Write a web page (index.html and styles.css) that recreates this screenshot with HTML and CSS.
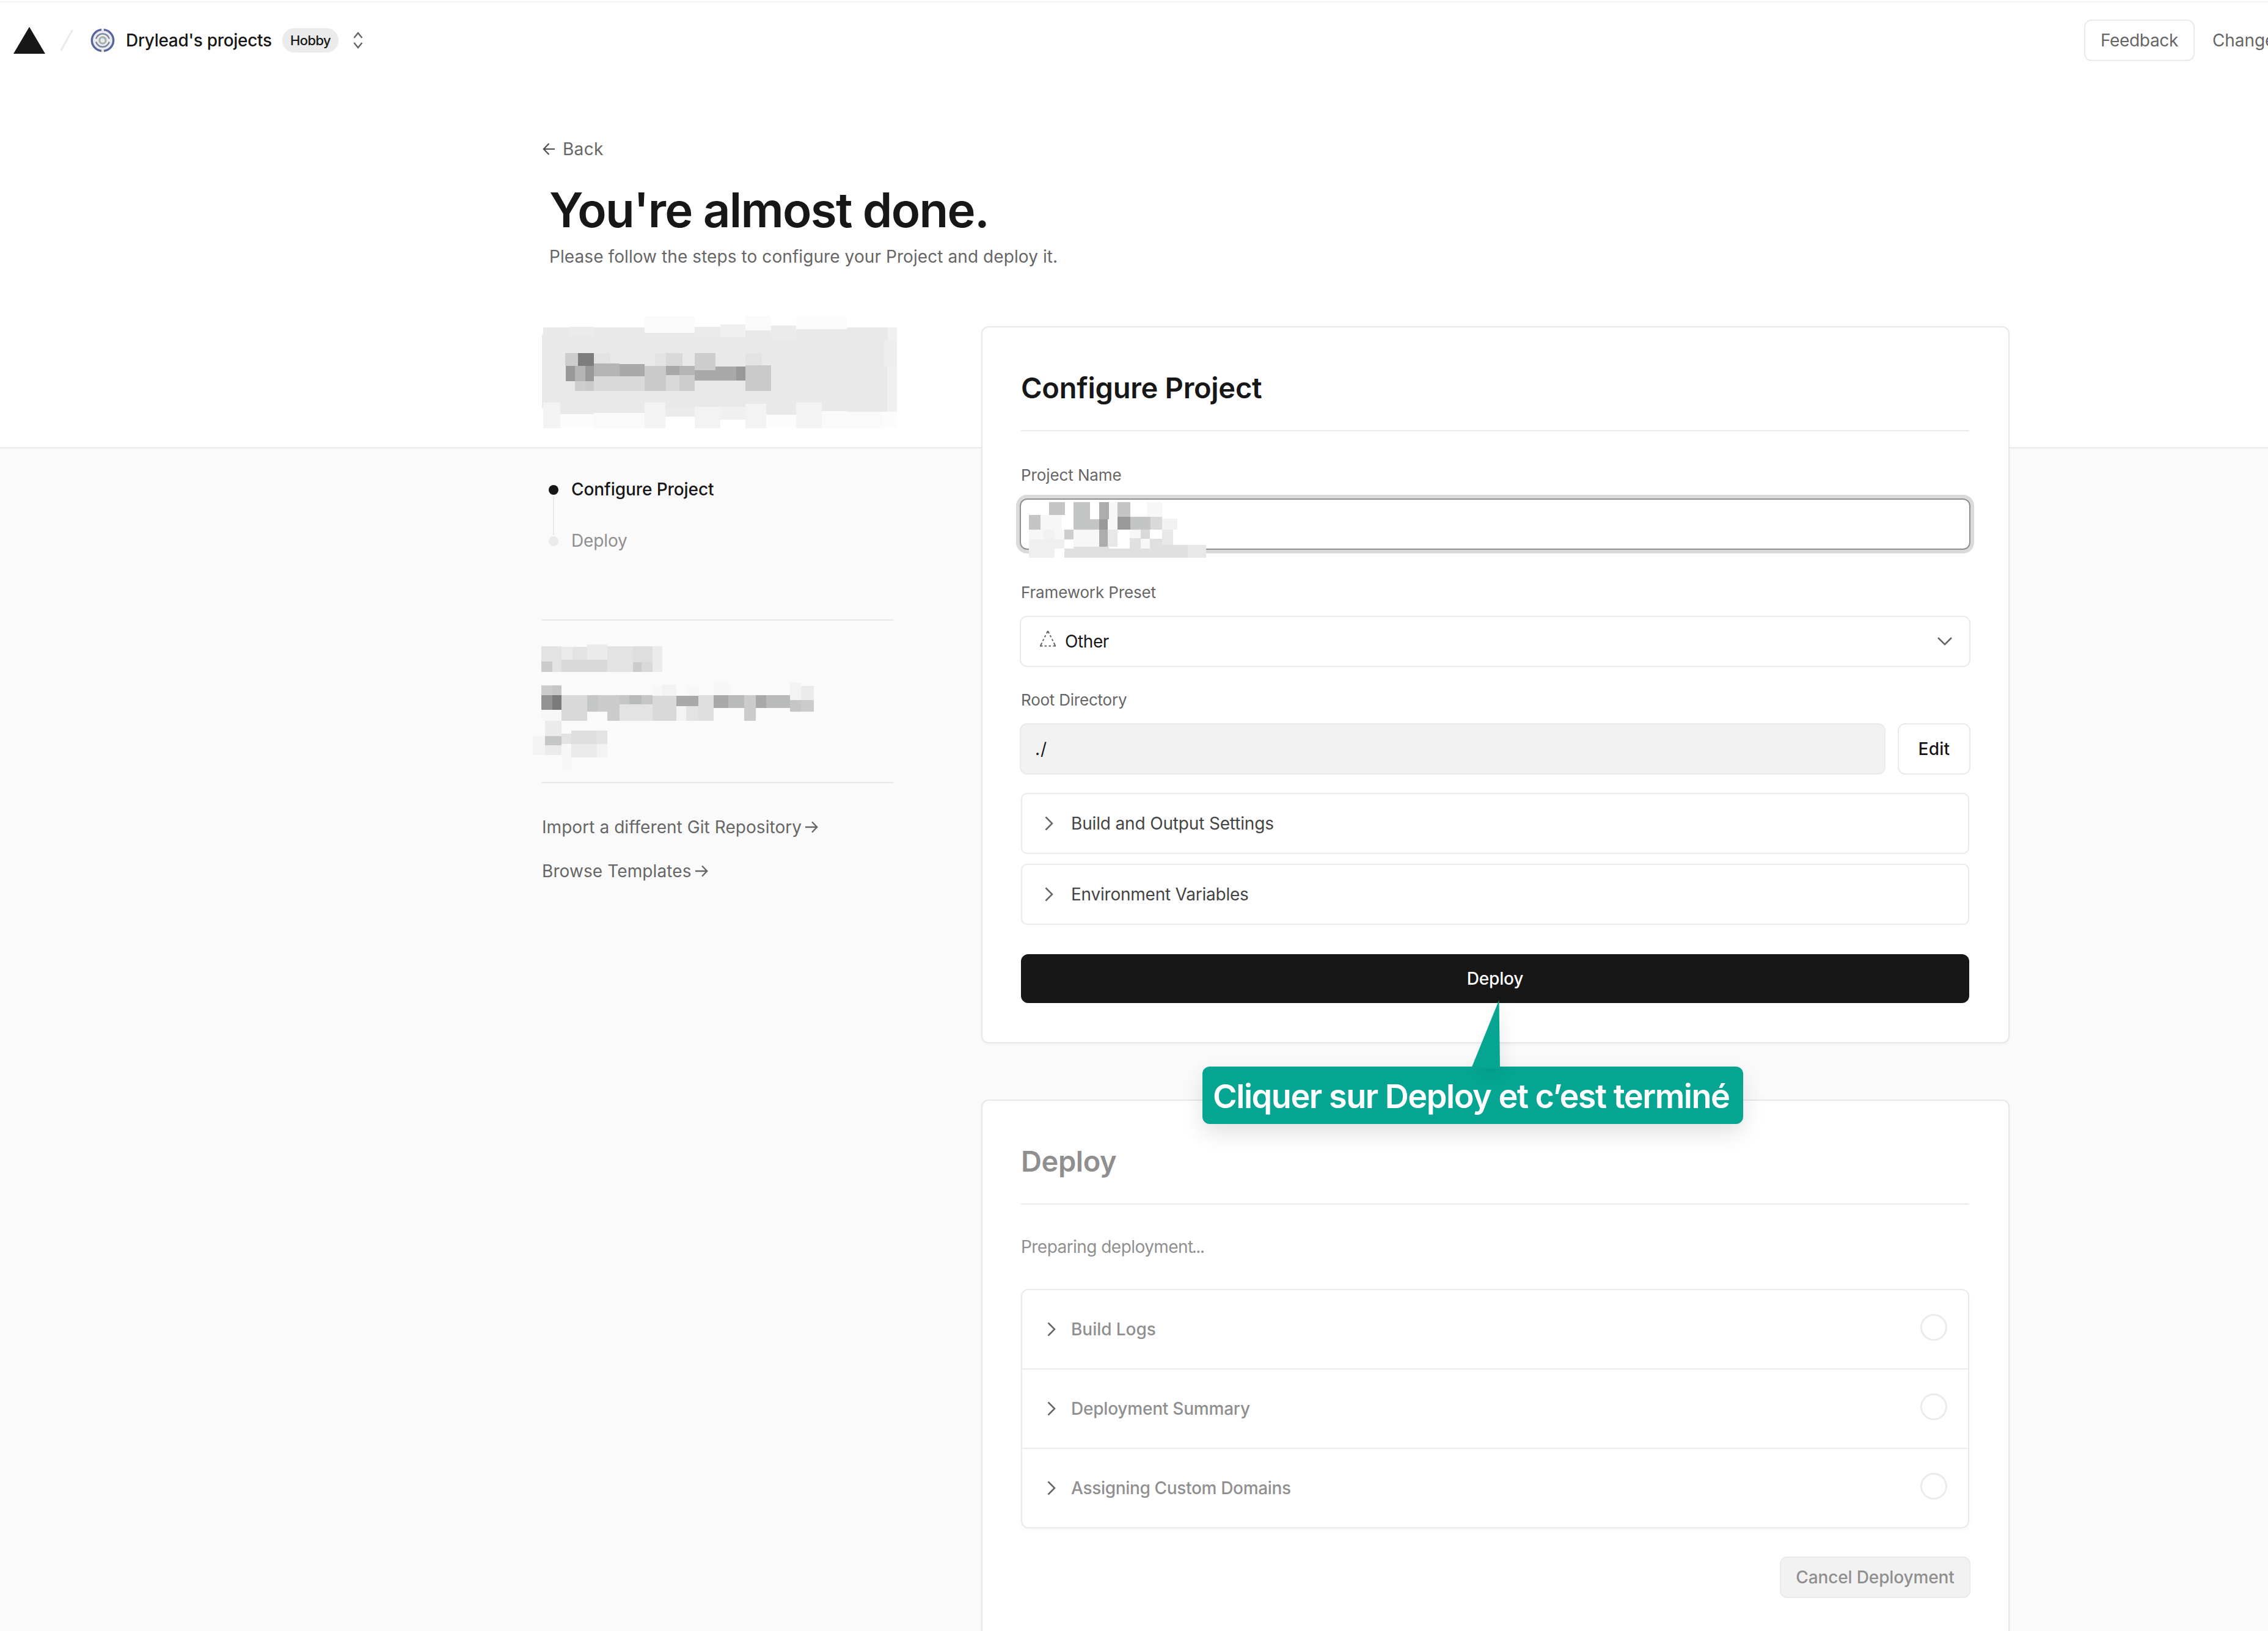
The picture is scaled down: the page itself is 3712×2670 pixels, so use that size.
FILE: index.html
```
<!DOCTYPE html>
<html lang="en">
<head>
<meta charset="utf-8">
<title>Configure Project</title>
<link rel="stylesheet" href="styles.css">
</head>
<body>
<div class="page">
  <header class="topbar">
    <svg class="logo" width="52" height="44" viewBox="0 0 52 44"><path d="M26 0 52 44H0z" fill="#171717"/></svg>
    <svg class="slash" width="24" height="38" viewBox="0 0 24 38"><path d="M21 3 3 35" stroke="#eaeaea" stroke-width="3" stroke-linecap="round"/></svg>
    <svg class="avatar" width="40" height="40" viewBox="0 0 40 40" fill="none">
      <circle cx="20" cy="20" r="19.5" fill="#ebebeb"/>
      <path d="M22 2.600A17.500 17.500 0 0 1 22 37.400M18 37.400A17.500 17.500 0 0 1 18 2.600" stroke="#56659c" stroke-width="3.400"/>
      <path d="M9.200 17.500A11.200 11.200 0 0 1 30.800 17.500M30.800 22.500A11.200 11.200 0 0 1 9.200 22.500" stroke="#7c87a6" stroke-width="2.600"/>
      <circle cx="20" cy="20" r="5.200" stroke="#a9adab" stroke-width="3"/>
      <path d="M17.500 16.200a5 5 0 0 1 6.500 6" stroke="#9cc4bd" stroke-width="1.500"/>
    </svg>
    <span class="team">Drylead's projects</span>
    <span class="plan">Hobby</span>
    <svg class="updown" width="16" height="28" viewBox="0 0 16 28" fill="none" stroke="#666" stroke-width="2.500"><path d="M1.500 10 8 2l6.500 8M1.500 18 8 26l6.500-8"/></svg>
    <nav class="topnav">
      <a class="feedback">Feedback</a>
      <a class="changelog">Changelog</a>
    </nav>
  </header>

  <section class="intro">
    <a class="back"><svg width="20" height="20" viewBox="0 0 20 20" fill="none" stroke="#4d4d4d" stroke-width="2.200"><path d="M10.500 1 1.800 10l8.700 9M2 10h18"/></svg><span>Back</span></a>
    <h1>You're almost done.</h1>
    <p>Please follow the steps to configure your Project and deploy it.</p>
  </section>

  <div class="columns">
    <aside class="sidebar">
      <svg class="mosaic" width="640" height="220" viewBox="0 0 1568 660" preserveAspectRatio="none" shape-rendering="crispEdges">
        <path fill="#e9e9e9" d="M71 108h1382v414H1289V545H71V505h-5V140h5z"/>
        <path fill="#ebebeb" d="M174 105h100v45H174zM679 105h103v50H679zM985 99h100v73H985zM561 500h118v46H561z"/>
        <path fill="#fafafa" d="M478 51h201v84H478zM882 51h103v72H882zM274 528h204v75H274zM1188 519h101v84h-101zM1289 522h145v81h-145z"/>
        <path fill="#fcfcfc" d="M1085 51h204v66h-204zM140 534h134v69H140zM965 537h120v66H965zM1434 522h56v81h-56z"/>
        <path fill="#fff" d="M561 546h118v57H561zM782 561h100v42H782z"/>
        <path fill="#f0f0f0" d="M782 93h100v64H782zM1453 108h37v64h-37zM1450 297h40v225h-40zM782 498h100v63H782z"/>
        <path fill="#eeeeee" d="M1437 172h53v125h-53z"/>
        <path fill="#f3f3f3" d="M71 477h69v126H71zM478 477h83v126h-83zM882 484h83v119h-83zM1085 477h103v126h-103zM679 498h103v105H679z"/>
        <path fill="#e3e3e3" d="M274 234h67v52h-67zM520 234h43v63h-43zM882 234h65v60h-65z"/>
        <path fill="#d9d9d9" d="M563 234h67v63h-67zM274 348h204v72H274zM563 342h54v78h-54z"/>
        <path fill="#cdcdcd" d="M159 234h52v63h-52zM679 234h83v84h-83zM198 372h42v48h-42zM617 342h62v78h-62z"/>
        <path fill="#c9cac9" d="M478 297h85v123h-85zM882 294h103v126H882zM240 372h34v48h-34z"/>
        <path fill="#b5b5b5" d="M198 297h42v75h-42zM274 285h103v63H274zM617 297h62v45h-62z"/>
        <path fill="#a9a9a9" d="M377 288h101v60H377zM563 297h54v45h-54zM679 318h83v51h-83zM762 300h83v69h-83z"/>
        <path fill="#999" d="M162 297h36v75h-36zM240 297h34v75h-34zM845 300h37v69h-37z"/>
        <path fill="#7d7d7d" d="M211 234h63v63h-63z"/>
      </svg>
      <div class="step step-active"><i></i><span>Configure Project</span></div>
      <div class="step-line"></div>
      <div class="step"><i></i><span>Deploy</span></div>
      <hr class="rule rule-first">
      <svg class="mosaic mosaic-repo" width="640" height="250" viewBox="0 0 1568 750" preserveAspectRatio="none" shape-rendering="crispEdges">
        <path fill="#e3e3e3" d="M64 84h81v126H64zM328 84h221v126H328zM189 87h58v63h-58zM377 369h133v81H377zM645 378h48v72h-48zM145 513h39v51h-39zM283 498h45v66h-45z"/>
        <path fill="#ebebeb" d="M145 87h44v63h-44zM247 75h81v75h-81zM510 84h39v126h-39zM78 450h67v75H78zM78 570h67v48H78zM184 564h103v66H184zM1105 279h51v69h-51z"/>
        <path fill="#dedede" d="M431 84h79v78h-79zM184 498h99v66h-99zM693 324h62v126h-62z"/>
        <path fill="#d9d9d9" d="M145 150h183v60H145zM466 162h44v48h-44zM145 324h102v126H145zM510 327h95v123h-95z"/>
        <path fill="#cccccc" d="M64 159h43v51H64zM431 162h35v48h-35zM328 324h49v126h-49zM292 324h36v81h-36zM877 324h47v126h-47zM1105 348h51v57h-51zM64 276h43v48H64z"/>
        <path fill="#c5c7c6" d="M107 276h38v48h-38zM247 324h45v81h-45zM377 324h39v45h-39zM465 324h45v45h-45zM1061 348h44v57h-44zM78 525h67v45H78z"/>
        <path fill="#b9bbba" d="M416 324h49v45h-49zM965 324h96v63h-96zM813 324h64v63h-64z"/>
        <path fill="#a9a9a9" d="M605 327h88v51h-88zM755 324h58v63h-58zM924 324h41v63h-41z"/>
        <path fill="#939393" d="M64 324h43v72H64z"/>
        <path fill="#7b7b7b" d="M107 324h38v72h-38z"/>
        <path fill="#f3f3f3" d="M549 273h56v54h-56zM1061 261h44v87h-44zM605 378h40v72h-40zM29 525h49v93H29zM287 564h41v66h-41z"/>
        <path fill="#f7f7f7" d="M510 276h39v51h-39zM649 276h44v51h-44zM64 396h81v54H64zM145 567h39v123h-39zM755 264h70v60h-70z"/>
      </svg>
      <hr class="rule">
      <a class="side-link side-link-first"><span>Import a different Git Repository</span><svg width="21" height="20" viewBox="0 0 21 20" fill="none" stroke="#666" stroke-width="2.400"><path d="M0 10h18.500M11 1.500 19.200 10 11 18.500"/></svg></a>
      <a class="side-link"><span class="browse">Browse Templates</span><svg width="21" height="20" viewBox="0 0 21 20" fill="none" stroke="#666" stroke-width="2.400"><path d="M0 10h18.500M11 1.500 19.200 10 11 18.500"/></svg></a>
    </aside>

    <main class="cards">
      <section class="card">
        <h2>Configure Project</h2>
        <label class="label label-first">Project Name</label>
        <div class="field field-focus">
          <svg class="field-mosaic" width="290" height="91" viewBox="230 906 711 274" preserveAspectRatio="none" shape-rendering="crispEdges">
            <path fill="#fff" d="M230 1090h711v90H230z"/>
            <path fill="#c4c6c5" d="M311 906h64v63h-64zM230 969h47v72h-47zM409 906h66v84h37v51H409zM586 906h51v72h-51zM637 978h81v63h-81z"/>
            <path fill="#acaeae" d="M512 906h39v84h-39zM512 1041h34v84h-34z"/>
            <path fill="#9a9a9a" d="M512 990h34v51h-34zM586 978h51v63h-51z"/>
            <path fill="#cdcdcd" d="M372 1041h37v48h-37z"/>
            <path fill="#d9d9d9" d="M718 978h46v63h-46zM679 1041h36v45h-36z"/>
            <path fill="#f7f7f7" d="M277 969h86v72h-86zM230 1041h142v48H230zM409 1041h103v84H409zM703 906h61v72h-61zM551 906h35v84h-35zM546 990h40v51h-40zM635 1041h44v42h-44zM679 1086h36v48h-36z"/>
            <path fill="#f2f2f2" d="M764 987h62v54h-62zM287 1041h46v48h-46z"/>
            <path fill="#efefef" d="M230 1089h142v45h-39v46H230z"/>
            <path fill="#e8e8e8" d="M546 1041h40v84h-40zM764 1041h44v75h-44zM867 1116h74v64h-74z"/>
            <path fill="#e0e0e0" d="M372 1134h37v46h-37zM409 1125h141v55H409zM550 1134h85v-51h44v51h36v-48h49v30h103v64H550z"/>
          </svg>
        </div>
        <label class="label label-framework">Framework Preset</label>
        <div class="field select">
          <svg class="other-icon" width="28" height="27" viewBox="0 0 28 27" fill="none" stroke="#666" stroke-width="2"><path d="M14 1 11.900 5M16.100 5 14 1M10.300 8 8.800 11M17.700 8 19.200 11M7.300 14.200 5.700 17.200M20.800 14.200 22.300 17.200M4.300 20.200 2 25M23.800 20.200 26 25M1 25.500h4.500M8.500 25.500h3.500M15.500 25.500h3.500M22.500 25.500h4.500"/></svg>
          <span class="other">Other</span>
          <svg class="select-chevron" width="24" height="14" viewBox="0 0 24 14" fill="none" stroke="#666" stroke-width="2.600"><path d="M1 1 12 12 23 1"/></svg>
        </div>
        <label class="label label-root">Root Directory</label>
        <div class="root-row">
          <div class="field root-dir">./</div>
          <button class="edit">Edit</button>
        </div>
        <div class="disclosure disclosure-build"><svg class="chevron" width="14" height="24" viewBox="0 0 14 24" fill="none" stroke="#666" stroke-width="2.600"><path d="M1.500 1.500 12 12 1.500 22.500"/></svg><span>Build and Output Settings</span></div>
        <div class="disclosure disclosure-env"><svg class="chevron" width="14" height="24" viewBox="0 0 14 24" fill="none" stroke="#666" stroke-width="2.600"><path d="M1.500 1.500 12 12 1.500 22.500"/></svg><span>Environment Variables</span></div>
        <button class="deploy">Deploy</button>
      </section>

      <section class="card card-pending">
        <h2>Deploy</h2>
        <p class="status">Preparing deployment<span class="dots">...</span></p>
        <div class="stages">
          <div class="stage"><svg class="chevron" width="14" height="24" viewBox="0 0 14 24" fill="none" stroke="#666" stroke-width="2.600"><path d="M1.500 1.500 12 12 1.500 22.500"/></svg><span>Build Logs</span><i class="ring"></i></div>
          <div class="stage"><svg class="chevron" width="14" height="24" viewBox="0 0 14 24" fill="none" stroke="#666" stroke-width="2.600"><path d="M1.500 1.500 12 12 1.500 22.500"/></svg><span class="summary">Deployment Summary</span><i class="ring"></i></div>
          <div class="stage"><svg class="chevron" width="14" height="24" viewBox="0 0 14 24" fill="none" stroke="#666" stroke-width="2.600"><path d="M1.500 1.500 12 12 1.500 22.500"/></svg><span class="domains">Assigning Custom Domains</span><i class="ring"></i></div>
        </div>
        <button class="cancel">Cancel Deployment</button>
      </section>
    </main>
  </div>

  <div class="callout">
    <svg class="callout-tip" width="48" height="112" viewBox="0 0 48 112"><path d="M45.500 0 47 112H0z" fill="#05a591"/></svg>
    <span>Cliquer sur Deploy et c’est terminé</span>
  </div>
</div>
</body>
</html>
```

FILE: styles.css
```
* { box-sizing: border-box; }

body {
  margin: 0;
  background: #fff;
  color: #171717;
  font: 400 28px/40px Inter, "Liberation Sans", sans-serif;
}

svg { display: block; flex: none; }
h1, h2, p { margin: 0; }
span { white-space: nowrap; }
button { font: inherit; margin: 0; padding: 0; display: block; }

.page {
  position: relative;
  width: 3712px;
  height: 2670px;
  overflow: hidden;
  padding-top: 2px;
  background: linear-gradient(#fff 732px, #eaeaea 732px, #eaeaea 734px, #fafafa 734px);
}

/* Top bar */
.topbar {
  display: flex;
  align-items: center;
  height: 126px;
  padding-left: 22px;
  border-top: 2px solid #f2f2f2;
}
.slash { margin-left: 23px; }
.avatar { margin-left: 27px; }
.team { flex: none; width: 237px; margin-left: 18px; font-weight: 500; letter-spacing: -0.32px; }
.plan {
  flex: none;
  width: 92px;
  height: 40px;
  margin-left: 19px;
  border-radius: 20px;
  background: #ebebeb;
  font-size: 22px;
  font-weight: 500;
  letter-spacing: -0.6px;
  text-align: center;
}
.updown { margin-left: 24px; }
.topnav { display: flex; align-items: center; gap: 29px; width: 301px; margin-left: auto; color: #666; }
.feedback {
  flex: none;
  width: 181px;
  height: 68px;
  border: 2px solid #eaeaea;
  border-radius: 12px;
  line-height: 64px;
  text-align: center;
  letter-spacing: -0.34px;
}
.changelog { letter-spacing: -0.1px; }

/* Intro */
.intro { padding: 96px 0 0 888px; }
.back { display: flex; align-items: center; gap: 13px; height: 40px; color: #666; letter-spacing: 0.3px; }
.intro h1 { margin: 40px 0 0 11px; font-size: 78px; font-weight: 600; line-height: 80px; letter-spacing: -1.7px; }
.intro p { margin: 16px 0 0 11px; color: #666; letter-spacing: 0.08px; }

/* Sidebar */
.columns { display: flex; gap: 106px; padding: 60px 0 0 860px; }
.sidebar { width: 640px; }
.step { display: flex; align-items: center; gap: 21px; height: 40px; padding-left: 38px; color: #8f8f8f; letter-spacing: -0.14px; }
.step i { width: 16px; height: 16px; margin-top: 2px; border-radius: 50%; background: #eaeaea; }
.step-active { margin-top: 61px; color: #171717; font-weight: 500; letter-spacing: -0.08px; }
.step-active i { background: #171717; }
.step-line { width: 2px; height: 64px; margin: -9px 0 -11px 45px; background: #eaeaea; }
.rule { width: 576px; height: 2px; margin: 0 0 0 27px; border: 0; background: #e8e8e8; }
.rule-first { margin-top: 109px; }
.mosaic-repo { margin-top: 14px; }
.side-link { display: flex; align-items: center; gap: 6px; height: 40px; margin-top: 32px; padding-left: 27px; color: #666; letter-spacing: 0.06px; }
.side-link-first { margin-top: 52px; }
.browse { letter-spacing: 0.1px; }

/* Cards */
.cards { display: flex; flex-direction: column; gap: 92px; width: 1683px; padding-top: 34px; }
.card {
  padding: 71px 64px 64px 63px;
  border: 2px solid #e8e8e8;
  border-radius: 12px;
  background: #fff;
  box-shadow: 0 2px 4px rgba(0, 0, 0, 0.04);
}
.card h2 {
  height: 99px;
  border-bottom: 2px solid #eaeaea;
  font-size: 47px;
  font-weight: 600;
  line-height: 56px;
  letter-spacing: -0.27px;
}
.label { display: block; margin: 0 0 22px; color: #666; font-size: 26px; line-height: 33px; letter-spacing: -0.1px; }
.label-first { margin-top: 55px; }
.label-framework { margin-top: 53px; letter-spacing: -0.14px; }
.label-root { margin-top: 37px; letter-spacing: -0.22px; }
.field { position: relative; height: 84px; margin: 0 -2px; border: 2px solid #eaeaea; border-radius: 12px; line-height: 80px; }
.field-focus { border-color: #8f8f8f; box-shadow: 0 0 0 6px #dadada; }
.field-mosaic { position: absolute; left: 13px; top: 4px; }
.select { display: flex; align-items: center; padding: 0 28px 0 30px; }
.other-icon { margin-top: -9px; }
.other { margin-left: 14px; letter-spacing: -0.4px; }
.select-chevron { margin-left: auto; }
.root-row { display: flex; gap: 20px; margin: 0 -2px; }
.root-dir { flex: 1; margin: 0; padding-left: 23px; background: #f2f2f2; letter-spacing: 0.9px; }
.edit { width: 119px; height: 84px; border: 2px solid #eaeaea; border-radius: 12px; background: #fff; color: #171717; font-weight: 500; letter-spacing: 0.25px; }
.disclosure { display: flex; align-items: center; gap: 29px; height: 100px; padding-left: 37px; border: 2px solid #eaeaea; border-radius: 10px; color: #444; letter-spacing: -0.16px; }
.disclosure-build { margin-top: 30px; }
.disclosure-env { margin-top: 16px; letter-spacing: -0.23px; }
.deploy { width: 100%; height: 80px; margin-top: 48px; border: 0; border-radius: 12px; background: #171717; color: #fff; font-weight: 500; letter-spacing: -0.18px; }

/* Pending deployment */
.card-pending h2 { color: #8f8f8f; letter-spacing: -0.42px; }
.status { margin: 49px 0; color: #8f8f8f; letter-spacing: -0.55px; }
.dots { margin-left: -2px; letter-spacing: -1.4px; }
.stages { border: 2px solid #eaeaea; border-radius: 12px; box-shadow: 0 4px 6px rgba(0, 0, 0, 0.03); }
.stage { display: flex; align-items: center; height: 128px; padding: 0 34px 0 41px; color: #8f8f8f; font-weight: 500; }
.stage + .stage { height: 130px; border-top: 2px solid #eaeaea; }
.stage span { margin-left: 25px; letter-spacing: -0.05px; }
.stage .summary { letter-spacing: -0.21px; }
.stage .domains { letter-spacing: -0.33px; }
.ring { width: 44px; height: 44px; margin: -6px 0 0 auto; border: 3px solid #ebebeb; border-radius: 50%; }
.cancel { width: 312px; height: 68px; margin: 46px -2px 0 auto; border: 2px solid #eaeaea; border-radius: 12px; background: #f2f2f2; color: #8f8f8f; font-weight: 500; letter-spacing: -0.13px; }

/* Annotation over the cards */
.callout {
  position: absolute;
  left: 1968px;
  top: 1746px;
  width: 885px;
  height: 94px;
  padding-left: 17px;
  border-radius: 12px;
  background: #05a591;
  color: #fff;
  font-size: 54px;
  font-weight: 600;
  line-height: 97px;
  letter-spacing: -1.48px;
  box-shadow: 0 14px 36px rgba(0, 0, 0, 0.12);
}
.callout-tip { position: absolute; left: 440px; top: -109px; filter: drop-shadow(8px 6px 10px rgba(0, 0, 0, 0.06)); }
```
